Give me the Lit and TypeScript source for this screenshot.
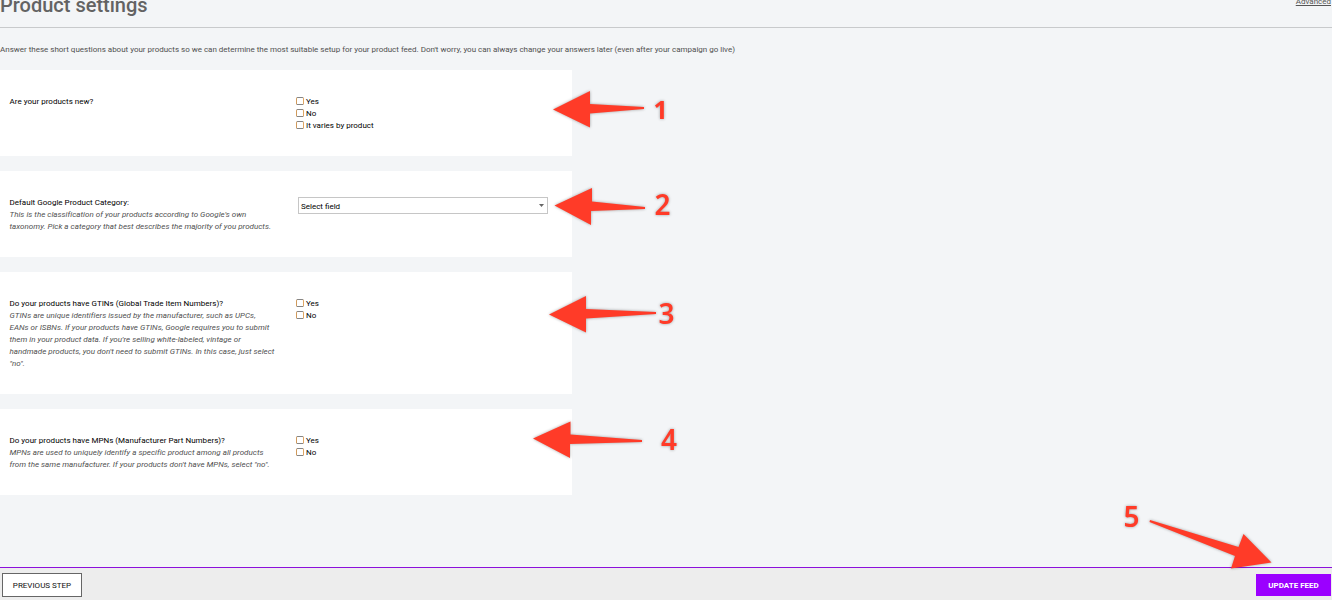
import { LitElement, html, css, nothing } from "lit";
import { customElement, property } from "lit/decorators.js";

interface Question {
  title: string;
  help: string[];
  options: string[];
  tall?: boolean;
}

const QUESTIONS: Question[] = [
  { title: "Are your products new?", help: [], options: ["Yes", "No", "It varies by product"] },
  {
    title: "Default Google Product Category:",
    help: [
      "This is the classification of your products according to Google's own",
      "taxonomy. Pick a category that best describes the majority of you products.",
    ],
    options: [],
  },
  {
    title: "Do your products have GTINs (Global Trade Item Numbers)?",
    help: [
      "GTINs are unique identifiers issued by the manufacturer, such as UPCs,",
      "EANs or ISBNs. If your products have GTINs, Google requires you to submit",
      "them in your product data. If you're selling white-labeled, vintage or",
      "handmade products, you don't need to submit GTINs. In this case, just select",
      "\"no\".",
    ],
    options: ["Yes", "No"],
    tall: true,
  },
  {
    title: "Do your products have MPNs (Manufacturer Part Numbers)?",
    help: [
      "MPNs are used to uniquely identify a specific product among all products",
      "from the same manufacturer. If your products don't have MPNs, select \"no\".",
    ],
    options: ["Yes", "No"],
  },
];

@customElement("question-card")
class QuestionCard extends LitElement {
  @property({ attribute: false }) question!: Question;

  static styles = css`
    :host { display: block; }
    .card {
      box-sizing: border-box;
      display: grid;
      grid-template-columns: 286.5px 1fr;
      width: 572px;
      height: 86px;
      padding: 25px 24px 0 9.5px;
      background: #fff;
      font: 8px/12px Roboto, sans-serif;
      color: #000;
    }
    .tall { height: 122px; }
    .text { padding-top: 1px; }
    .title { white-space: nowrap; letter-spacing: 0.02px; }
    .help { color: #505050; font-style: italic; white-space: nowrap; letter-spacing: 0.025px; }
    .option { display: flex; align-items: center; height: 12px; gap: 2px; }
    .label { position: relative; top: 1px; }
    .box {
      box-sizing: border-box;
      width: 8px;
      height: 8px;
      border: 1px solid #858585;
      border-left-color: #d09a5c;
      border-right-color: #dfa563;
      border-radius: 1.5px;
      background: #fff;
    }
    .select {
      box-sizing: border-box;
      display: flex;
      align-items: center;
      justify-content: space-between;
      width: 250px;
      height: 17px;
      margin: 1px 0 0 2px;
      padding: 0 3px 0 2px;
      border: 1px solid #c6c6c6;
    }
    .caret { display: block; fill: #666; }
  `;

  render() {
    const q = this.question;
    return html`<section class="card ${q.tall ? "tall" : ""}">
      <div class="text">
        <div class="title">${q.title}</div>
        ${q.help.map((line) => html`<div class="help">${line}</div>`)}
      </div>
      <div>
        ${q.options.map((o) => html`<div class="option"><span class="box"></span><span class="label">${o}</span></div>`)}
        ${q.options.length
          ? nothing
          : html`<div class="select"><span class="label">Select field</span>
              <svg class="caret" width="5" height="3" viewBox="0 0 5 3"><path d="M0 0h5L2.5 3z" /></svg></div>`}
      </div>
    </section>`;
  }
}

@customElement("app-root")
class AppRoot extends LitElement {
  static styles = css`
    :host {
      display: block;
      position: relative;
      width: 1332px;
      height: 600px;
      overflow: hidden;
      font-family: Roboto, sans-serif;
      background: #f3f5f7;
    }
    .page { display: flex; flex-direction: column; height: 600px; }
    .head {
      box-sizing: border-box;
      display: flex;
      justify-content: space-between;
      height: 28px;
      border-bottom: 1px solid #c8cacc;
    }
    .heading {
      margin: -7px 0 0;
      font-size: 20px;
      line-height: 24px;
      font-weight: 500;
      color: #636363;
      white-space: nowrap;
    }
    .advanced { margin: -4px 1px 0 0; height: 10px; font-size: 8px; line-height: 12px; color: #555; text-decoration: underline; text-underline-offset: 1px; }
    .intro { height: 42px; font-size: 8px; line-height: 43px; letter-spacing: -0.005px; color: #505050; white-space: nowrap; }
    .cards { display: flex; flex-direction: column; gap: 15px; flex: 1; }
    .foot {
      box-sizing: border-box;
      display: flex;
      justify-content: space-between;
      height: 33px;
      padding: 4px 1px 0 2px;
      border-top: 1px solid #8c10dc;
      background: #ededed;
    }
    .prev, .update {
      box-sizing: border-box;
      padding: 1px 0 0;
      border-radius: 0;
      font: 8px/12px Roboto, sans-serif;
      white-space: nowrap;
    }
    .prev { width: 80px; height: 24px; margin-top: 1px; border: 1px solid #666; background: #fff; color: #111; }
    .update { width: 75px; height: 22px; margin-top: 2px; border: 0; background: #9b00ff; color: #fff; font-weight: 700; }
    .marks {
      position: absolute;
      inset: 0;
      filter: drop-shadow(0 0 1.5px rgba(0, 0, 0, 0.35));
      fill: #ff3b28;
      font: 600 28px "Noto Sans", sans-serif;
      pointer-events: none;
    }
    .first { font-size: 25px; font-weight: 700; }
  `;

  render() {
    return html`<div class="page">
        <header class="head">
          <h1 class="heading">Product settings</h1>
          <span class="advanced">Advanced</span>
        </header>
        <div class="intro">Answer these short questions about your products so we can determine the most suitable setup for your product feed. Don't worry, you can always change your answers later (even after your campaign go live)</div>
        <main class="cards">${QUESTIONS.map((q) => html`<question-card .question=${q}></question-card>`)}</main>
        <footer class="foot">
          <button class="prev">PREVIOUS STEP</button>
          <button class="update">UPDATE FEED</button>
        </footer>
      </div>
      <svg class="marks" width="1332" height="600" viewBox="0 0 1332 600">
        <path d="M553 109.500L590 91V104L644 107V109L590 113.500V127.500Z" />
        <path d="M554.500 205.500L592 188V201.500L645 207V209L591 211V225Z" />
        <path d="M549 314.500L586 296V309L656 312V314L586 318.500V332.500Z" />
        <path d="M533 438.500L570.500 421.500V434.500L642 440V442L570 444V458Z" />
        <path d="M1150 520L1238.500 547L1243.500 534L1271.500 562.500L1231 568.500L1235 556L1149.500 522Z" />
        <text class="first" x="653.500" y="119">1</text>
        <text x="654.500" y="215">2</text>
        <text x="658.500" y="324">3</text>
        <text x="661" y="450">4</text>
        <text x="1123.500" y="526.500">5</text>
      </svg>`;
  }
}
